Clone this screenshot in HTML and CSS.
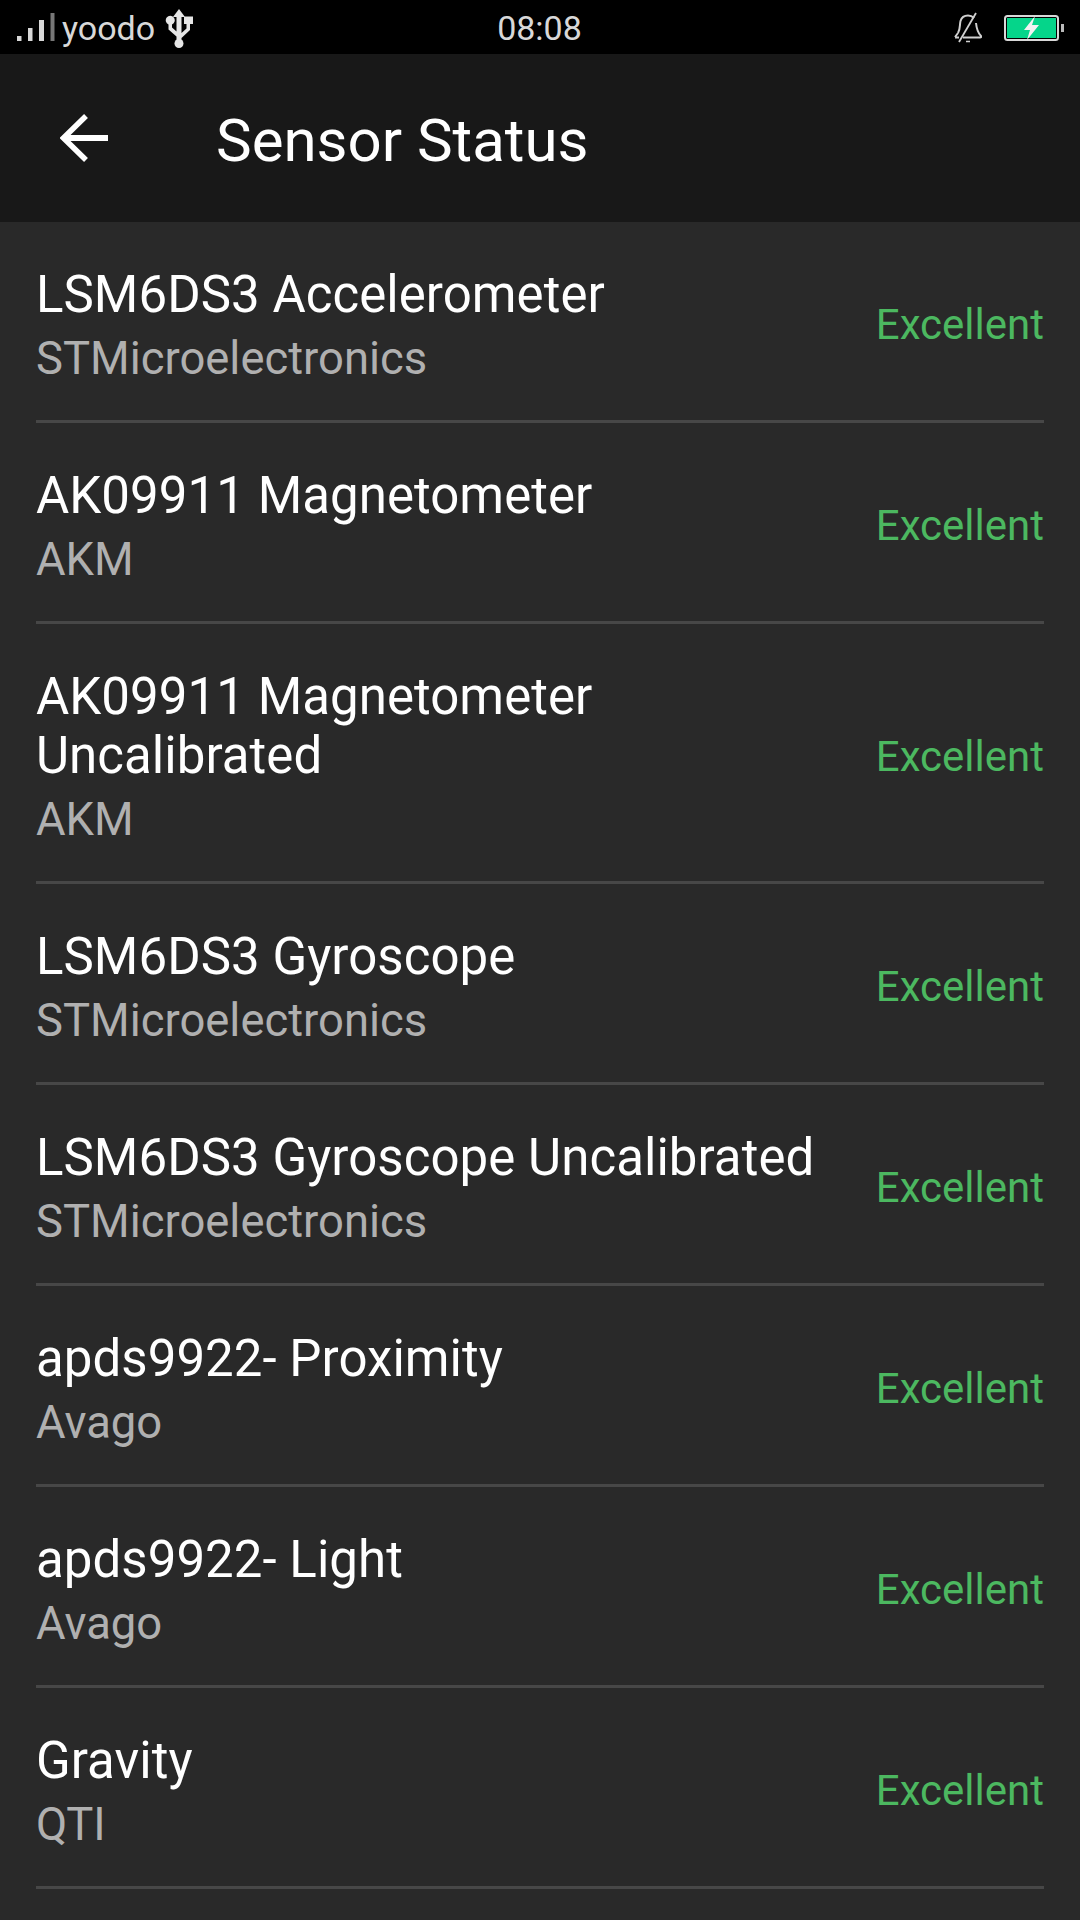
FILE: index.html
```html
<!DOCTYPE html>
<html lang="en">
<head>
<meta charset="utf-8">
<title>Sensor Status</title>
<link rel="stylesheet" href="styles.css">
</head>
<body>
<div class="status">
  <div class="status-left">
    <svg class="signal" width="38" height="30" viewBox="0 0 38 30">
      <rect x="0" y="23" width="4.500" height="5" fill="#d8d8d8"/>
      <rect x="11" y="15" width="4.500" height="13" fill="#d8d8d8"/>
      <rect x="22" y="7" width="5" height="21" fill="#d8d8d8"/>
      <rect x="33.500" y="0" width="4" height="28" fill="#777"/>
    </svg>
    <span class="carrier">yoodo</span>
    <svg class="usb" width="28" height="39" viewBox="0 0 28 39">
      <path d="M14 0 L20 8 H16.500 V24 L21.500 19.500 V15 H19 V7.500 H28 V15 H25 V21 L16.500 29 V32 H11.500 V27.500 L3.500 20.500 V15.500 A4.500 4.500 0 1 1 7 15.500 V18.500 L11.500 22.500 V8 H8 Z" fill="#e6e6e6"/>
      <circle cx="14" cy="34.500" r="4.500" fill="#e6e6e6"/>
    </svg>
  </div>
  <div class="clock">08:08</div>
  <div class="status-right">
    <svg class="bell" width="28" height="32" viewBox="0 0 28 32" fill="none" stroke="#d0d0d0" stroke-width="2">
      <path d="M4 21 C6.500 17 5.500 13 6.500 9 C7.500 5.500 10.500 3.500 14 3.500 C16.500 3.500 18.500 4.500 20 6"/>
      <path d="M22 11 C22.500 16 23 20 27 24 C27.500 25 27 25.500 26 25.500 H9"/>
      <path d="M1 25.500 H5 M1 25 L4 21"/>
      <path d="M22 1 L5 30" stroke-width="1.800"/>
      <path d="M12 29.500 H16" stroke-width="1.500"/>
    </svg>
    <svg class="battery" width="60" height="26" viewBox="0 0 60 26">
      <rect x="1" y="1" width="53" height="24" rx="2.500" fill="none" stroke="#d8d8d8" stroke-width="2"/>
      <rect x="3" y="3" width="49" height="20" fill="#05d58a"/>
      <rect x="57" y="9" width="3" height="8" fill="#bbb"/>
      <path d="M31 1 L20 15 H26 L23 25 L35 10 H28 Z" fill="#f2f2f2"/>
    </svg>
  </div>
</div>
<header class="toolbar">
  <svg class="back" width="48" height="48" viewBox="0 0 48 48" fill="none" stroke="#fff" stroke-width="6">
    <path d="M3 24 H48"/>
    <path d="M26 2 L3.500 24 L26 46" stroke-width="5.500"/>
  </svg>
  <h1 class="title">Sensor Status</h1>
</header>
<main class="list">
  <div class="row"><div class="info"><div class="name">LSM6DS3 Accelerometer</div><div class="vendor">STMicroelectronics</div></div><div class="state">Excellent</div></div>
  <div class="row"><div class="info"><div class="name">AK09911 Magnetometer</div><div class="vendor">AKM</div></div><div class="state">Excellent</div></div>
  <div class="row"><div class="info"><div class="name">AK09911 Magnetometer Uncalibrated</div><div class="vendor">AKM</div></div><div class="state">Excellent</div></div>
  <div class="row"><div class="info"><div class="name">LSM6DS3 Gyroscope</div><div class="vendor">STMicroelectronics</div></div><div class="state">Excellent</div></div>
  <div class="row"><div class="info"><div class="name">LSM6DS3 Gyroscope Uncalibrated</div><div class="vendor">STMicroelectronics</div></div><div class="state">Excellent</div></div>
  <div class="row"><div class="info"><div class="name">apds9922- Proximity</div><div class="vendor">Avago</div></div><div class="state">Excellent</div></div>
  <div class="row"><div class="info"><div class="name">apds9922- Light</div><div class="vendor">Avago</div></div><div class="state">Excellent</div></div>
  <div class="row"><div class="info"><div class="name">Gravity</div><div class="vendor">QTI</div></div><div class="state">Excellent</div></div>
</main>
</body>
</html>
```
FILE: styles.css
```css
* { box-sizing: border-box; }
html, body { margin: 0; padding: 0; }
body {
  width: 1080px;
  height: 1920px;
  overflow: hidden;
  background: #292929;
  font-family: Roboto, sans-serif;
  color: #fff;
}
.status {
  height: 54px;
  background: #000;
  display: grid;
  grid-template-columns: 1fr auto 1fr;
  align-items: center;
  padding: 0 16px 0 17px;
  color: #d8d8d8;
}
.status-left { display: flex; align-items: center; }
.signal { margin-right: 7px; }
.carrier { font-size: 34px; line-height: 54px; }
.usb { margin-left: 10px; }
.clock { font-size: 34px; line-height: 56px; margin-left: -2px; }
.status-right { display: flex; align-items: center; justify-content: flex-end; gap: 22px; }
.toolbar {
  height: 168px;
  background: #181818;
  display: flex;
  align-items: center;
  padding-left: 60px;
}
.back { flex: none; }
.title {
  margin: 6px 0 0 108px;
  font-size: 60px;
  font-weight: 400;
  line-height: 64px;
}
.list { padding: 0 36px; }
.row {
  display: flex;
  align-items: center;
  justify-content: space-between;
  padding: 43px 0 32px;
  border-bottom: 3px solid #474747;
}
.info { width: 800px; }
.name { font-size: 51px; line-height: 59px; letter-spacing: 0.05px; }
.vendor { font-size: 45.4px; line-height: 59px; margin-top: 5px; color: #b0b0b0; }
.state { font-size: 42px; color: #4cb860; margin-bottom: 4px; }
```
